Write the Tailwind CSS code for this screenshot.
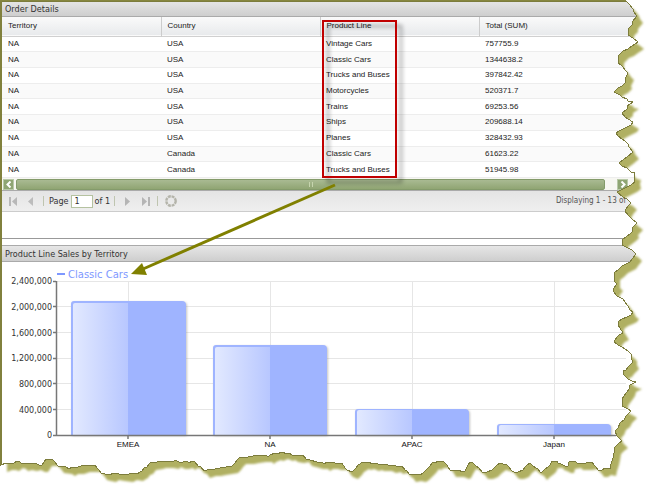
<!DOCTYPE html>
<html lang="en">
<head>
<meta charset="utf-8">
<title>Order Details</title>
<script src="https://cdn.jsdelivr.net/npm/@tailwindcss/browser@4"></script>
</head>
<body class="bg-white">
<main class="relative flex flex-col overflow-hidden pl-0.5 pt-px font-['DejaVu_Sans_Condensed',sans-serif] text-[9px] text-[#333]">
  <section class="flex flex-col border-b border-[#999]">
    <h1 class="flex h-4 items-center border-b border-[#aaa] bg-linear-to-b from-[#e6e6e6] to-[#cecece] px-[3px] text-[9px] leading-3">Order Details</h1>
    <table class="h-[161px] w-full table-fixed border-collapse text-left font-['Liberation_Sans',sans-serif] text-[8px] leading-3 text-[#222]">
      <colgroup><col class="w-[159px]"><col class="w-[159px]"><col class="w-[159px]"><col></colgroup>
      <thead>
        <tr class="h-[19px] border-b border-[#d0d0d0] bg-linear-to-b from-[#fafafa] to-[#e8eaec]">
          <th class="border-r border-[#ccc] px-1.5 py-0 font-normal">Territory</th>
          <th class="border-r border-[#ccc] px-1.5 py-0 font-normal">Country</th>
          <th class="border-r border-[#ccc] px-1.5 py-0 font-normal">Product Line</th>
          <th class="px-1.5 py-0 font-normal">Total (SUM)</th>
        </tr>
      </thead>
      <tbody class="[&_td]:px-1.5 [&_td]:py-0 [&_tr]:border-b [&_tr]:border-[#ededed] [&_tr:nth-child(even)]:bg-[#fafafa]">
        <tr><td>NA</td><td>USA</td><td>Vintage Cars</td><td>757755.9</td></tr>
        <tr><td>NA</td><td>USA</td><td>Classic Cars</td><td>1344638.2</td></tr>
        <tr><td>NA</td><td>USA</td><td>Trucks and Buses</td><td>397842.42</td></tr>
        <tr><td>NA</td><td>USA</td><td>Motorcycles</td><td>520371.7</td></tr>
        <tr><td>NA</td><td>USA</td><td>Trains</td><td>69253.56</td></tr>
        <tr><td>NA</td><td>USA</td><td>Ships</td><td>209688.14</td></tr>
        <tr><td>NA</td><td>USA</td><td>Planes</td><td>328432.93</td></tr>
        <tr><td>NA</td><td>Canada</td><td>Classic Cars</td><td>61623.22</td></tr>
        <tr><td>NA</td><td>Canada</td><td>Trucks and Buses</td><td>51945.98</td></tr>
      </tbody>
    </table>
    <div class="flex h-[13px] items-center border-b border-[#aaa] bg-[#f7f7f2] pl-px pr-8">
      <button aria-label="Scroll left" class="flex h-[11px] w-[11px] items-center justify-center border border-[#b8c9a8] bg-[#8fa573]"><svg class="h-[7px] w-[6px]" viewBox="0 0 6 7" fill="none" stroke="#fff" stroke-width="2"><path d="M4.5.5 1.5 3.5l3 3"/></svg></button>
      <div class="ml-0.5 mr-3 flex h-[11px] flex-1 items-center justify-center gap-0.5 rounded-xs border border-[#849b6b] bg-linear-to-b from-[#a9ba92] to-[#90a573]"><i class="h-[5px] w-px bg-[#c6d4ae]"></i><i class="h-[5px] w-px bg-[#c6d4ae]"></i></div>
      <button aria-label="Scroll right" class="flex h-[11px] w-[11px] items-center justify-center border border-[#b8c9a8] bg-[#8fa573]"><svg class="h-[7px] w-[6px]" viewBox="0 0 6 7" fill="none" stroke="#fff" stroke-width="2"><path d="m1.5.5 3 3-3 3"/></svg></button>
    </div>
    <div class="flex h-[21px] items-center border-b border-[#ccc] bg-linear-to-b from-[#e4e4e4] to-[#efefef] pl-[7px] pr-[34px] text-[9px] leading-3">
      <button aria-label="First page"><svg class="h-[9px] w-[8px]" viewBox="0 0 8 9" fill="#b8b8b8"><path d="M0 0h2v9H0zM8 0v9L3 4.500z"/></svg></button>
      <button aria-label="Previous page" class="ml-[11px]"><svg class="h-[9px] w-[5px]" viewBox="0 0 5 9" fill="#bcbcbc"><path d="M5 0v9L0 4.500z"/></svg></button>
      <i class="ml-[10px] h-[10px] w-px bg-[#bfc5b0]"></i>
      <label for="page" class="ml-[5px]">Page</label>
      <input id="page" value="1" class="ml-0.5 h-[13px] w-[22px] border border-[#b5c2a0] bg-white px-[3px] text-[9px] leading-3">
      <span class="ml-0.5">of 1</span>
      <i class="ml-1 h-[10px] w-px bg-[#bfc5b0]"></i>
      <button aria-label="Next page" class="ml-[10px]"><svg class="h-[9px] w-[5px]" viewBox="0 0 5 9" fill="#b5b5b5"><path d="M0 0v9l5-4.500z"/></svg></button>
      <button aria-label="Last page" class="ml-[12px]"><svg class="h-[9px] w-[8px]" viewBox="0 0 8 9" fill="#b5b5b5"><path d="M6 0h2v9H6zM0 0v9l5-4.500z"/></svg></button>
      <i class="ml-[7px] h-[10px] w-px bg-[#bfc5b0]"></i>
      <button aria-label="Refresh" class="ml-[7px]"><svg class="h-[12px] w-[12px]" viewBox="0 0 12 12" fill="none" stroke="#b4b4aa" stroke-width="2.400"><circle cx="6" cy="6" r="4.700" stroke-dasharray="2.900 .791"/></svg></button>
      <span class="ml-auto text-[8px] text-[#555]">Displaying 1 - 13 of</span>
    </div>
    <div class="h-[26px]"></div>
  </section>
  <section class="mt-1.5 flex flex-col">
    <h2 class="flex h-[17px] items-center border-y border-[#aaa] bg-linear-to-b from-[#e6e6e6] to-[#cecece] px-[3px] text-[9px] leading-3">Product Line Sales by Territory</h2>
    <svg class="block h-auto w-full" viewBox="2 262 658 236" role="img" aria-label="Product line sales by territory">
      <defs>
        <linearGradient id="gloss"><stop offset="0" stop-color="#e2e9ff"/><stop offset="1" stop-color="#b8c7ff"/></linearGradient>
        <filter id="soft" x="-10%" y="-10%" width="120%" height="120%"><feDropShadow dx="1" dy="1" stdDeviation="1" flood-color="#999" flood-opacity=".6"/></filter>
      </defs>
      <path stroke="#e6e6e6" stroke-width="1" d="M57 281.500H626M57 306.500H626M57 332.500H626M57 358.500H626M57 383.500H626M57 409.500H626M128.500 281V435M270.500 281V435M412.500 281V435M554.500 281V435"/>
      <g filter="url(#soft)" fill="#9fb4ff">
        <path d="M71 435V304q0-3 3-3H182q4 0 4 4V435z"/>
        <path d="M213 435V348q0-3 3-3H323q4 0 4 4V435z"/>
        <path d="M355 435V412q0-3 3-3H465q4 0 4 4V435z"/>
        <path d="M497 435V427q0-3 3-3H607q4 0 4 4V435z"/>
      </g>
      <g fill="url(#gloss)">
        <path d="M73 435V305q0-2 2-2H128V435z"/>
        <path d="M215 435V349q0-2 2-2H270V435z"/>
        <path d="M357 435V412q0-2 2-2H412V435z"/>
        <path d="M499 435V427q0-2 2-2H554V435z"/>
      </g>
      <path fill="none" stroke="#777" stroke-width="1.500" d="M56.500 281V436M53 281.500h3M53 306.500h3M53 332.500h3M53 358.500h3M53 383.500h3M53 409.500h3M53 435.500H616M128 436v3M270 436v3M412 436v3M554 436v3"/>
      <path fill="#7e98ff" d="M57 273h8v2h-8z"/>
      <text x="68" y="278" font-size="10" fill="#7e98ff" class="font-['DejaVu_Sans',sans-serif]">Classic Cars</text>
      <g class="font-['DejaVu_Sans',sans-serif]" font-size="8" fill="#333" text-anchor="end">
        <text x="52" y="284">2,400,000</text><text x="52" y="310">2,000,000</text><text x="52" y="336">1,600,000</text><text x="52" y="361">1,200,000</text><text x="52" y="387">800,000</text><text x="52" y="413">400,000</text><text x="52" y="438">0</text>
      </g>
      <g class="font-['Liberation_Sans',sans-serif]" font-size="8" fill="#111" text-anchor="middle">
        <text x="128" y="447">EMEA</text><text x="270" y="447">NA</text><text x="412" y="447">APAC</text><text x="554" y="447">Japan</text>
      </g>
    </svg>
  </section>

  <!-- Highlight round the Product Line column -->
  <div class="pointer-events-none absolute left-[322px] top-5 h-[158px] w-[75px] border-2 border-[#c00000] drop-shadow-[5px_5px_2px_rgba(0,0,0,0.4)]"></div>

  <!-- Arrow and torn paper edge -->
  <svg class="pointer-events-none absolute inset-0 h-full w-full" viewBox="0 0 660 498" preserveAspectRatio="none" aria-hidden="true">
    <defs>
      <path id="page-edge" d="M1 1H626L630 5 633 9 634 12 637 16 632 22 632 25 628 29 628 35 633 38 638 42 632 46 628 49 623 51 618 56 618 63 621 65 623 67 625 70 628 73 625 79 626 82 622 86 618 88 614 92 620 95 622 97 627 99 628 101 633 102 627 106 627 109 622 113 625 117 628 119 633 122 631 125 627 127 621 130 616 133 618 136 622 139 625 141 628 144 629 147 633 152 627 157 623 160 619 163 622 166 627 168 631 172 635 173 634 177 635 182 631 185 627 187 621 190 617 192 623 197 627 199 631 203 628 206 625 211 628 215 632 219 637 223 632 228 633 231 630 234 626 237 622 240 622 245 628 248 632 250 636 254 632 259 630 262 626 264 622 266 618 270 614 273 614 281 617 284 614 288 613 291 617 296 623 299 625 302 628 306 630 310 633 312 631 315 627 317 622 319 618 322 618 325 620 328 623 333 619 335 617 337 614 342 618 345 622 347 628 351 631 354 631 358 633 362 628 367 626 370 623 371 624 375 628 379 632 381 636 382 630 385 629 389 627 392 624 396 622 399 622 406 628 409 631 411 628 414 626 416 624 420 620 423 618 428 615 431 617 436 622 441 618 444 615 447 614 453 613 458 611 464 610 469 605 468 602 470 598 470 596 467 594 465 592 462 586 463 577 463 575 461 569 462 568 466 565 466 561 464 558 463 557 461 552 461 550 465 548 467 544 470 541 473 538 469 536 468 533 466 530 463 526 466 523 470 518 472 514 472 512 471 509 467 507 465 503 464 500 463 496 466 492 470 487 472 482 472 479 468 476 466 473 463 470 462 467 467 465 471 463 472 458 470 454 470 450 470 447 465 443 461 438 461 435 463 433 462 430 466 427 469 423 473 420 475 415 474 410 475 407 471 405 470 402 466 397 467 395 465 390 466 386 464 378 464 376 463 373 464 368 462 365 463 363 462 358 465 356 468 352 472 347 470 345 468 342 463 335 463 332 462 327 462 324 464 322 462 317 462 310 460 306 459 303 455 298 456 292 455 289 453 287 454 282 452 277 454 275 453 270 455 268 457 266 455 260 455 253 456 248 457 240 457 237 460 235 463 232 466 226 467 220 468 215 469 210 469 204 471 201 467 198 466 195 462 192 461 189 463 187 461 183 462 179 462 175 460 173 462 167 461 160 461 157 462 150 463 147 467 144 468 142 471 140 472 137 474 131 473 127 475 119 474 113 473 110 475 105 474 101 473 99 470 97 468 95 465 90 465 84 465 78 467 72 467 69 469 66 467 58 466 55 462 52 459 46 459 44 462 42 465 39 465 35 463 31 464 26 463 22 464 20 462 17 461 13 464 10 463 6 463 1 465z"/>
      <mask id="off-page" maskUnits="userSpaceOnUse" x="0" y="0" width="660" height="498"><rect width="660" height="498" fill="#fff"/><use href="#page-edge" fill="#000"/></mask>
      <filter id="haze"><feGaussianBlur stdDeviation="1.200"/></filter>
    </defs>
    <g mask="url(#off-page)">
      <rect width="660" height="498" fill="#fff"/>
      <use href="#page-edge" transform="translate(6 7)" fill="#b0b062" filter="url(#haze)"/>
    </g>
    <use href="#page-edge" fill="none" stroke="#7c7c3c" stroke-width="1" shape-rendering="crispEdges"/>
    <path d="M1 0V465M0 .5H626" fill="none" stroke="#86863f" stroke-width="1"/>
    <path d="M335 185 143 269" stroke="#808000" stroke-width="3"/>
    <path d="M131 274 142 263 147 275z" fill="#808000"/>
  </svg>
</main>
</body>
</html>
